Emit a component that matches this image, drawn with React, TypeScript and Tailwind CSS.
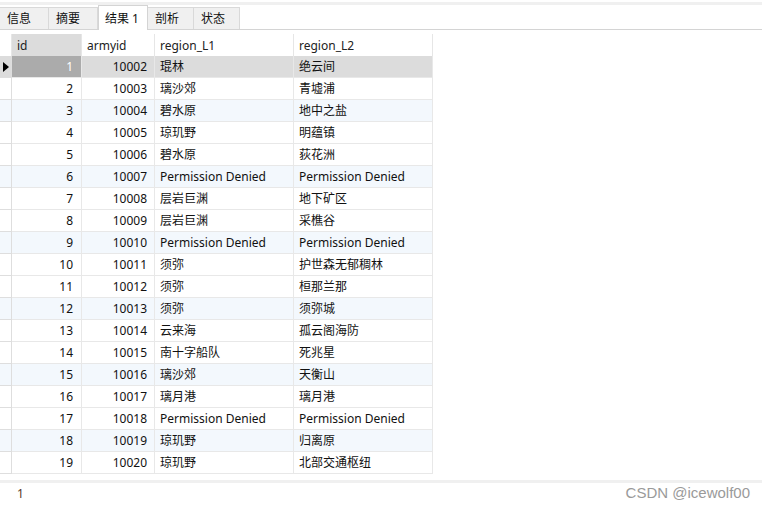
import React from "react";

type Row = [number, number, string, string];

const rows: Row[] = [
  [1, 10002, "琨林", "绝云间"],
  [2, 10003, "璃沙郊", "青墟浦"],
  [3, 10004, "碧水原", "地中之盐"],
  [4, 10005, "琼玑野", "明蕴镇"],
  [5, 10006, "碧水原", "荻花洲"],
  [6, 10007, "Permission Denied", "Permission Denied"],
  [7, 10008, "层岩巨渊", "地下矿区"],
  [8, 10009, "层岩巨渊", "采樵谷"],
  [9, 10010, "Permission Denied", "Permission Denied"],
  [10, 10011, "须弥", "护世森无郁稠林"],
  [11, 10012, "须弥", "桓那兰那"],
  [12, 10013, "须弥", "须弥城"],
  [13, 10014, "云来海", "孤云阁海防"],
  [14, 10015, "南十字船队", "死兆星"],
  [15, 10016, "璃沙郊", "天衡山"],
  [16, 10017, "璃月港", "璃月港"],
  [17, 10018, "Permission Denied", "Permission Denied"],
  [18, 10019, "琼玑野", "归离原"],
  [19, 10020, "琼玑野", "北部交通枢纽"],
];

const tabs = ["信息", "摘要", "结果 1", "剖析", "状态"];

const font = "font-['Noto_Sans','Noto_Sans_CJK_SC',sans-serif]";

export default function App() {
  return (
    <div className={`w-[762px] h-[506px] bg-white overflow-hidden text-[12px] text-[#111] ${font}`}>
      <div className="h-[3px] mt-[2px] bg-[#f0f0f0]" />
      {/* tabs */}
      <div className="flex items-end h-[25px] border-b border-[#d4d4d4]">
        {tabs.map((t, i) =>
          i === 2 ? (
            <div
              key={t}
              className="w-[50px] h-[25px] -mb-px bg-white border-x border-t border-[#d4d4d4] flex items-center pl-[6px] pt-[1px] leading-none"
            >
              {t}
            </div>
          ) : (
            <div
              key={t}
              className={`h-[22px] bg-[#f0f0f0] border-r border-t border-[#d9d9d9] flex items-center pl-[7px] pt-[1px] leading-none ${
                i === 0 || i === 1 ? "w-[49px]" : "w-[46px]"
              }`}
            >
              {t}
            </div>
          )
        )}
      </div>
      {/* grid */}
      <div className="mt-[4px] w-[433px]">
        <div className="flex h-[22px] text-[#222]">
          <div className="w-[12px] border-r border-[#e6e6e6]" />
          <div className="w-[70px] bg-[#dcdcdc] border-r border-[#e6e6e6] pl-[5px] pt-[1px] flex items-center">id</div>
          <div className="w-[73px] border-r border-[#e6e6e6] pl-[5px] pt-[1px] flex items-center">armyid</div>
          <div className="w-[139px] border-r border-[#e6e6e6] pl-[5px] pt-[1px] flex items-center">region_L1</div>
          <div className="w-[139px] border-r border-[#e6e6e6] pl-[5px] pt-[1px] flex items-center">region_L2</div>
        </div>
        {rows.map(([id, army, l1, l2]) => {
          const sel = id === 1;
          const blue = id % 3 === 0;
          const bg = sel ? "bg-[#dcdcdc]" : blue ? "bg-[#f3f8fd]" : "bg-white";
          return (
            <div key={id} className={`flex h-[22px] ${bg}`}>
              <div className="w-[12px] border-r border-b border-[#dedede] flex items-center">
                {sel && (
                  <svg width="6" height="10" viewBox="0 0 6 10" className="ml-[3px]">
                    <path d="M0 0 L6 5 L0 10 Z" fill="#000" />
                  </svg>
                )}
              </div>
              <div
                className={`w-[70px] border-r border-b border-[#e8e8e8] flex items-center justify-end pr-[8px] pt-[1px] ${
                  sel ? "bg-[#ababab] text-white" : ""
                }`}
              >
                {id}
              </div>
              <div className="w-[73px] border-r border-b border-[#e8e8e8] flex items-center justify-end pr-[7px] pt-[1px]">
                {army}
              </div>
              <div className="w-[139px] border-r border-b border-[#e8e8e8] flex items-center pl-[5px] pt-[1px] whitespace-nowrap">
                {l1}
              </div>
              <div className="w-[139px] border-r border-b border-[#e8e8e8] flex items-center pl-[5px] pt-[1px] whitespace-nowrap">
                {l2}
              </div>
            </div>
          );
        })}
      </div>
      <div className="mt-[6px] h-[3px] bg-[#f0f0f0]" />
      <div className="flex items-center justify-between h-[17px] mt-[2px]">
        <span className="ml-[17px] text-[12px] text-[#5a3a2a]">1</span>
        <span className="mr-[12px] text-[15px] text-[#9a9a9a] font-['Liberation_Sans',sans-serif]">
          CSDN @icewolf00
        </span>
      </div>
    </div>
  );
}
